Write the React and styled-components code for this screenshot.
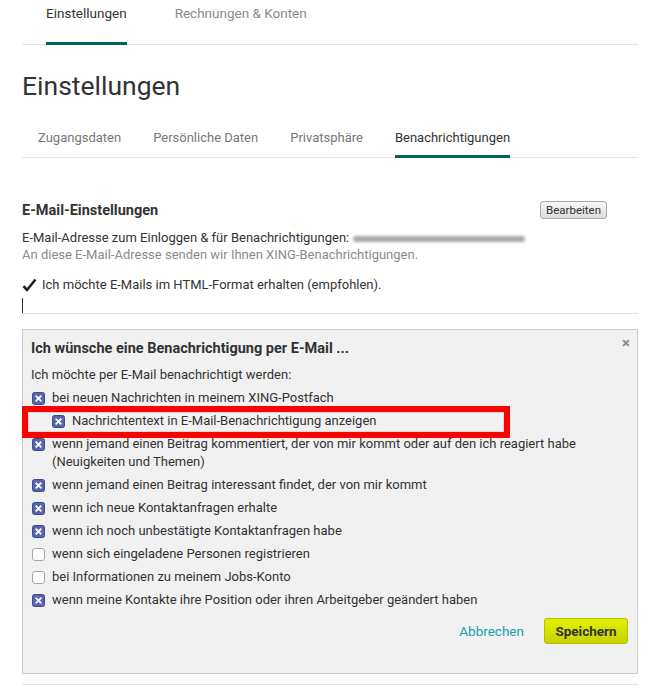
import React from 'react';
import styled, { createGlobalStyle } from 'styled-components';

const GlobalStyle = createGlobalStyle`
  body {
    margin: 0;
    background: #fff;
    font-family: Roboto, "Open Sans", sans-serif;
    color: #333;
  }
`;

const Page = styled.div`
  padding: 0 23px 0 22px;
  font-size: 13px;
`;

const TopNav = styled.div`
  display: flex;
  gap: 48px;
  padding-left: 24px;
  height: 44px;
  border-bottom: 1px solid #e2e2e2;
`;

const TopTab = styled.div`
  font-size: 13.5px;
  line-height: 27px;
  color: ${p => (p.$active ? '#333' : '#8f8a86')};
  border-bottom: 3px solid ${p => (p.$active ? '#006561' : 'transparent')};
  height: 42px;
`;

const Title = styled.h1`
  margin: 24px 0 0;
  font-size: 26.5px;
  font-weight: 400;
  line-height: 34px;
  color: #333;
`;

const SubNav = styled.div`
  display: flex;
  gap: 32px;
  margin-top: 25px;
  padding-left: 16px;
  border-bottom: 1px solid #e2e2e2;
`;

const SubTab = styled.div`
  font-size: 13px;
  line-height: 20px;
  padding-bottom: 7px;
  margin-bottom: -1px;
  color: ${p => (p.$active ? '#333' : '#777')};
  border-bottom: 3px solid ${p => (p.$active ? '#006561' : 'transparent')};
`;

const SectionHead = styled.div`
  display: flex;
  align-items: center;
  justify-content: space-between;
  margin-top: 43px;
  height: 18px;
`;

const SectionTitle = styled.h2`
  margin: 0;
  font-size: 14.5px;
  font-weight: 700;
  color: #333;
`;

const EditButton = styled.button`
  margin-right: 31px;
  height: 18px;
  padding: 0 5px;
  font-family: inherit;
  font-size: 11.5px;
  color: #333;
  background: linear-gradient(#f8f8f8, #dcdcdc);
  border: 1px solid #aaa;
  border-radius: 3px;
`;

const InfoBlock = styled.div`
  margin-top: 10px;
  line-height: 17px;
`;

const Muted = styled.div`
  color: #8b8b8b;
`;

const Redacted = styled.span`
  display: inline-block;
  vertical-align: middle;
  width: 172px;
  height: 6px;
  margin-left: 4px;
  background: #a8a8a8;
  border-radius: 3px;
  filter: blur(1.8px);
`;

const CheckLine = styled.div`
  display: flex;
  align-items: center;
  gap: 5px;
  margin-top: 13px;
  line-height: 18px;
`;

const Caret = styled.div`
  width: 1px;
  height: 15px;
  margin-top: 4px;
  background: #333;
`;

const Divider = styled.div`
  height: 1px;
  background: #e2e2e2;
  margin-top: ${p => p.$top || 0}px;
`;

const Box = styled.div`
  margin-top: 15px;
  background: #f1f1f1;
  border: 1px solid #ccc;
  padding: 9px 8px 29px;
  position: relative;
`;

const BoxTitle = styled.h3`
  margin: 0;
  font-size: 14.5px;
  font-weight: 700;
  line-height: 20px;
  color: #333;
`;

const Close = styled.span`
  position: absolute;
  top: 6px;
  right: 7px;
  font-size: 15px;
  line-height: 15px;
  color: #8a8a8a;
  font-weight: 700;
`;

const Lead = styled.div`
  margin-top: 7px;
  line-height: 18px;
`;

const Row = styled.div`
  position: relative;
  display: flex;
  align-items: flex-start;
  gap: 7px;
  margin-top: 5px;
  padding-left: ${p => (p.$indent ? 21 : 1)}px;
  line-height: 18px;
`;

const BoxMark = styled.span`
  flex: none;
  width: 13px;
  height: 13px;
  margin-top: 2.5px;
  display: flex;
`;

const Highlight = styled.span`
  position: absolute;
  left: -9px;
  top: -6px;
  width: 488px;
  height: 32px;
  box-sizing: border-box;
  border: 6px solid #f00;
  box-shadow: inset 0 0 0 1px #d8d8d8;
  pointer-events: none;
`;

const Actions = styled.div`
  display: flex;
  justify-content: flex-end;
  align-items: center;
  gap: 20px;
  margin-top: 9px;
`;

const CancelLink = styled.a`
  color: #1aa0aa;
  font-size: 13.5px;
  text-decoration: none;
`;

const SaveButton = styled.button`
  height: 26px;
  width: 84px;
  margin-right: 1px;
  font-family: inherit;
  font-size: 13.5px;
  font-weight: 700;
  color: #333;
  background: linear-gradient(#e4f000, #c6d300);
  border: 1px solid #b4bf00;
  border-radius: 3px;
`;

const Checkbox = ({ checked }) => (
  <BoxMark>
    {checked ? (
      <svg width="13" height="13" viewBox="0 0 13 13">
        <rect x="0.5" y="0.5" width="12" height="12" rx="2" fill="#5866ad" stroke="#3d4a8c" />
        <path d="M4.3 4.3 L8.7 8.7 M8.7 4.3 L4.3 8.7" stroke="#fff" strokeWidth="1.8" strokeLinecap="square" />
      </svg>
    ) : (
      <svg width="13" height="13" viewBox="0 0 13 13">
        <rect x="0.5" y="0.5" width="12" height="12" rx="2.5" fill="#fff" stroke="#a6a6a6" />
      </svg>
    )}
  </BoxMark>
);

const options = [
  { label: 'bei neuen Nachrichten in meinem XING-Postfach', checked: true },
  { label: 'Nachrichtentext in E-Mail-Benachrichtigung anzeigen', checked: true, indent: true, marked: true },
  { label: 'wenn jemand einen Beitrag kommentiert, der von mir kommt oder auf den ich reagiert habe (Neuigkeiten und Themen)', checked: true },
  { label: 'wenn jemand einen Beitrag interessant findet, der von mir kommt', checked: true },
  { label: 'wenn ich neue Kontaktanfragen erhalte', checked: true },
  { label: 'wenn ich noch unbestätigte Kontaktanfragen habe', checked: true },
  { label: 'wenn sich eingeladene Personen registrieren', checked: false },
  { label: 'bei Informationen zu meinem Jobs-Konto', checked: false },
  { label: 'wenn meine Kontakte ihre Position oder ihren Arbeitgeber geändert haben', checked: true },
];

export default function App() {
  return (
    <Page>
      <GlobalStyle />
      <TopNav>
        <TopTab $active>Einstellungen</TopTab>
        <TopTab>Rechnungen &amp; Konten</TopTab>
      </TopNav>

      <Title>Einstellungen</Title>

      <SubNav>
        <SubTab>Zugangsdaten</SubTab>
        <SubTab>Persönliche Daten</SubTab>
        <SubTab>Privatsphäre</SubTab>
        <SubTab $active>Benachrichtigungen</SubTab>
      </SubNav>

      <SectionHead>
        <SectionTitle>E-Mail-Einstellungen</SectionTitle>
        <EditButton>Bearbeiten</EditButton>
      </SectionHead>

      <InfoBlock>
        <div>
          E-Mail-Adresse zum Einloggen &amp; für Benachrichtigungen:<Redacted />
        </div>
        <Muted>An diese E-Mail-Adresse senden wir Ihnen XING-Benachrichtigungen.</Muted>
      </InfoBlock>

      <CheckLine>
        <svg width="15" height="14" viewBox="0 0 15 14">
          <path d="M1.5 8.2 L5 12 L13.5 1.5" fill="none" stroke="#222" strokeWidth="2.6" strokeLinejoin="round" />
        </svg>
        <span>Ich möchte E-Mails im HTML-Format erhalten (empfohlen).</span>
      </CheckLine>
      <Caret />
      <Divider />

      <Box>
        <BoxTitle>Ich wünsche eine Benachrichtigung per E-Mail ...</BoxTitle>
        <Close>×</Close>
        <Lead>Ich möchte per E-Mail benachrichtigt werden:</Lead>
        {options.map(o => (
          <Row key={o.label} $indent={o.indent}>
            {o.marked && <Highlight />}
            <Checkbox checked={o.checked} />
            <span>{o.label}</span>
          </Row>
        ))}
        <Actions>
          <CancelLink href="#">Abbrechen</CancelLink>
          <SaveButton>Speichern</SaveButton>
        </Actions>
      </Box>
      <Divider $top={10} />
    </Page>
  );
}
